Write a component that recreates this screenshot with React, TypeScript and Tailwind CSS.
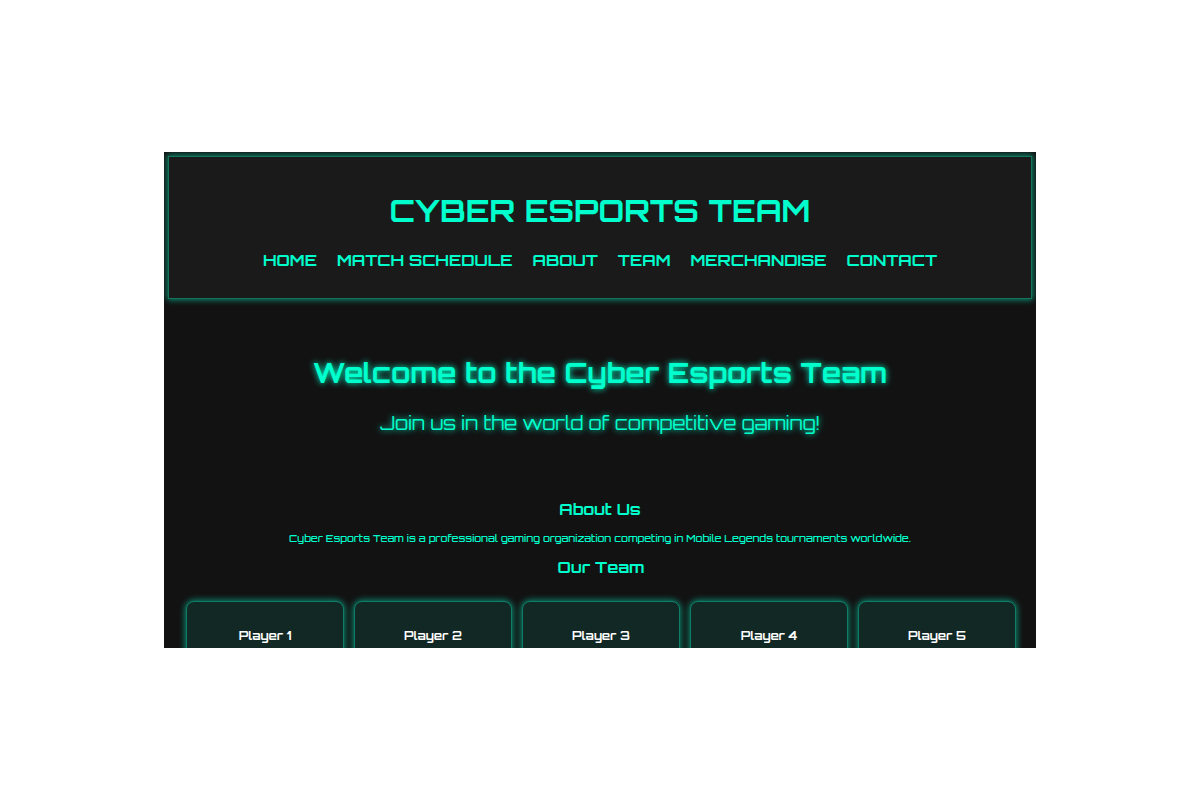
const links = [
  { label: "HOME", href: "#home" },
  { label: "MATCH SCHEDULE", href: "#schedule" },
  { label: "ABOUT", href: "#about" },
  { label: "TEAM", href: "#team" },
  { label: "MERCHANDISE", href: "#merchandise" },
  { label: "CONTACT", href: "#contact" },
];

const players = ["Player 1", "Player 2", "Player 3", "Player 4", "Player 5"];

export default function App() {
  return (
    <div className="flex min-h-screen items-center bg-white px-4 font-['Orbitron','DejaVu_Sans',sans-serif] lg:px-[164px]">
      <div className="h-[62vh] w-full overflow-hidden bg-[#121212] text-center text-[#00ffcc]">
        <header className="m-1 border border-[#10755f] bg-[#1a1a1a] pt-8 pb-[22px] shadow-[0_0_6px_1px_#0d8a70]">
          <h1 className="text-[31px] leading-[44px] font-bold">CYBER ESPORTS TEAM</h1>
          <nav className="mt-[11px] flex flex-wrap justify-center gap-x-5 text-base leading-8 font-bold">
            {links.map((link) => (
              <a key={link.label} href={link.href}>
                {link.label}
              </a>
            ))}
          </nav>
        </header>
        <main>
          <section
            id="home"
            className="pt-12 [text-shadow:0_0_6px_#00ffcc]"
          >
            <h2 className="text-[28px] leading-[44px] font-bold">Welcome to the Cyber Esports Team</h2>
            <p className="mt-3 text-[19px] leading-8">Join us in the world of competitive gaming!</p>
          </section>
          <section id="about" className="pt-[58px]">
            <h3 className="text-base leading-6 font-bold">About Us</h3>
            <p className="mt-[7px] text-[10px] leading-5 font-medium">
              Cyber Esports Team is a professional gaming organization competing in Mobile Legends tournaments worldwide.
            </p>
          </section>
          <section id="team" className="pt-[7px] pr-5 pl-[22px]">
            <h3 className="text-base leading-6 font-bold">Our Team</h3>
            <div className="mt-[22px] grid grid-cols-5 gap-[10px]">
              {players.map((player) => (
                <article
                  key={player}
                  className="h-40 rounded-lg border border-[#0b7f68] bg-[#122825] pt-6 shadow-[0_0_6px_1px_#0d8a70]"
                >
                  <h4 className="text-xs leading-5 font-bold text-white">{player}</h4>
                </article>
              ))}
            </div>
          </section>
        </main>
      </div>
    </div>
  );
}
